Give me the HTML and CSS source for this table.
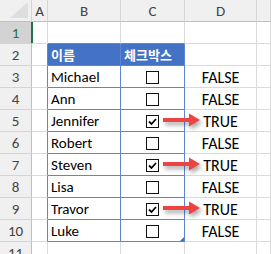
FILE: index.html
```html
<!DOCTYPE html>
<html>
<head>
	<link rel="stylesheet" href="styles.css">
</head>
<body>
    <div class="sheet">
        <div class="row head">
            <div class="corner"><div class="tri"></div></div><div class="col">A</div><div class="col">B</div><div class="col">C</div><div class="col">D</div><div class="col"></div>
        </div>
        <div class="row">
            <div class="num active">1</div><div class="cell"></div><div class="cell above"></div><div class="cell above"></div><div class="cell"></div><div class="cell"></div>
        </div>
        <div class="row">
            <div class="num">2</div><div class="cell lead"></div><div class="cell tb title">이름</div><div class="cell tb title">체크박스</div><div class="cell"></div><div class="cell"></div>
        </div>
        <div class="row">
            <div class="num">3</div><div class="cell lead"></div><div class="cell tb name">Michael</div><div class="cell tb box"><span class="check"></span></div><div class="cell val">FALSE</div><div class="cell"></div>
        </div>
        <div class="row">
            <div class="num">4</div><div class="cell lead"></div><div class="cell tb name">Ann</div><div class="cell tb box"><span class="check"></span></div><div class="cell val">FALSE</div><div class="cell"></div>
        </div>
        <div class="row">
            <div class="num">5</div><div class="cell lead"></div><div class="cell tb name">Jennifer</div>
            <div class="cell tb box">
                <span class="check"><svg width="11" height="11" viewBox="0 0 11 11"><polyline points="2,5.5 4.5,8 9,3" /></svg></span>
                <svg class="arrow" width="44" height="22" viewBox="0 0 44 22"><path d="M0 8 H26 V3.5 L37 10 L26 16.5 V12 H0 Z" /></svg>
            </div>
            <div class="cell val">TRUE</div><div class="cell"></div>
        </div>
        <div class="row">
            <div class="num">6</div><div class="cell lead"></div><div class="cell tb name">Robert</div><div class="cell tb box"><span class="check"></span></div><div class="cell val">FALSE</div><div class="cell"></div>
        </div>
        <div class="row">
            <div class="num">7</div><div class="cell lead"></div><div class="cell tb name">Steven</div>
            <div class="cell tb box">
                <span class="check"><svg width="11" height="11" viewBox="0 0 11 11"><polyline points="2,5.5 4.5,8 9,3" /></svg></span>
                <svg class="arrow" width="44" height="22" viewBox="0 0 44 22"><path d="M0 8 H26 V3.5 L37 10 L26 16.5 V12 H0 Z" /></svg>
            </div>
            <div class="cell val">TRUE</div><div class="cell"></div>
        </div>
        <div class="row">
            <div class="num">8</div><div class="cell lead"></div><div class="cell tb name">Lisa</div><div class="cell tb box"><span class="check"></span></div><div class="cell val">FALSE</div><div class="cell"></div>
        </div>
        <div class="row">
            <div class="num">9</div><div class="cell lead"></div><div class="cell tb name">Travor</div>
            <div class="cell tb box">
                <span class="check"><svg width="11" height="11" viewBox="0 0 11 11"><polyline points="2,5.5 4.5,8 9,3" /></svg></span>
                <svg class="arrow" width="44" height="22" viewBox="0 0 44 22"><path d="M0 8 H26 V3.5 L37 10 L26 16.5 V12 H0 Z" /></svg>
            </div>
            <div class="cell val">TRUE</div><div class="cell"></div>
        </div>
        <div class="row">
            <div class="num">10</div><div class="cell lead"></div><div class="cell tb name">Luke</div><div class="cell tb box last"><span class="check"></span></div><div class="cell val">FALSE</div><div class="cell"></div>
        </div>
        <div class="row">
            <div class="num">11</div><div class="cell"></div><div class="cell"></div><div class="cell"></div><div class="cell"></div><div class="cell"></div>
        </div>
    </div>
</body>
</html>
```

FILE: styles.css
```css
body {
	margin: 0;
	overflow: hidden;
	background: #fff;
	font-family: "Carlito", "Lato", "Liberation Sans", sans-serif;
}
.sheet {
	width: 271px;
	height: 254px;
	overflow: hidden;
}
.row {
	display: grid;
	grid-template-columns: 32px 16px 73px 64px 72px 1fr;
	height: 22px;
}
.row > div {
	box-sizing: border-box;
	border-right: 1px solid #dadada;
	border-bottom: 1px solid #dadada;
	display: flex;
	align-items: center;
	font-size: 15px;
	color: #000;
}

/* column and row headers */
.head > div {
	background: #f0f0f0;
	border-right-color: #d4d4d4;
	border-bottom-color: #bfbfbf;
	justify-content: center;
	color: #444;
}
.corner {
	justify-content: flex-end !important;
	align-items: flex-end !important;
	padding: 0 3px 3px 0;
}
.tri {
	width: 18px;
	height: 16px;
	background: #dedede;
	clip-path: polygon(100% 0, 100% 100%, 0 100%);
}
.row > .num {
	background: #f0f0f0;
	border-right-color: #bfbfbf;
	border-bottom-color: #d4d4d4;
	justify-content: center;
	color: #444;
}
.row > .num.active {
	background: #d3d3d3;
	color: #217346;
	border-right: 2px solid #217346;
	margin-right: -1px;
}

/* table B2:C10 */
.row > .lead { border-right-color: #5f84d2; }
.row > .above { border-bottom-color: #5f84d2; }
.row > .tb {
	border-right-color: #5f84d2;
	border-bottom-color: #5f84d2;
}
.row > .title {
	background: #4472c4;
	color: #fff;
	font-family: "Noto Sans CJK KR", sans-serif;
	font-weight: bold;
	font-size: 13px;
	padding-left: 3px;
}
.row > .name { padding: 1px 0 0 3px; }
.row > .box {
	justify-content: center;
	position: relative;
}
.row > .last::after {
	content: "";
	position: absolute;
	right: 0;
	bottom: 0;
	width: 4px;
	height: 4px;
	background: #4472c4;
	clip-path: polygon(100% 0, 100% 100%, 0 100%);
}
.check {
	box-sizing: border-box;
	width: 13px;
	height: 13px;
	border: 1px solid #111;
	background: #fff;
	display: flex;
	margin-top: 1px;
}
.check polyline {
	fill: none;
	stroke: #000;
	stroke-width: 1.8;
}
.arrow {
	position: absolute;
	left: 42px;
	top: 0;
	filter: drop-shadow(2px 3px 2px rgba(0, 0, 0, 0.35));
}
.arrow path { fill: #ec4343; }
.row > .val {
	justify-content: center;
	padding-top: 1px;
	font-size: 16px;
}
```
